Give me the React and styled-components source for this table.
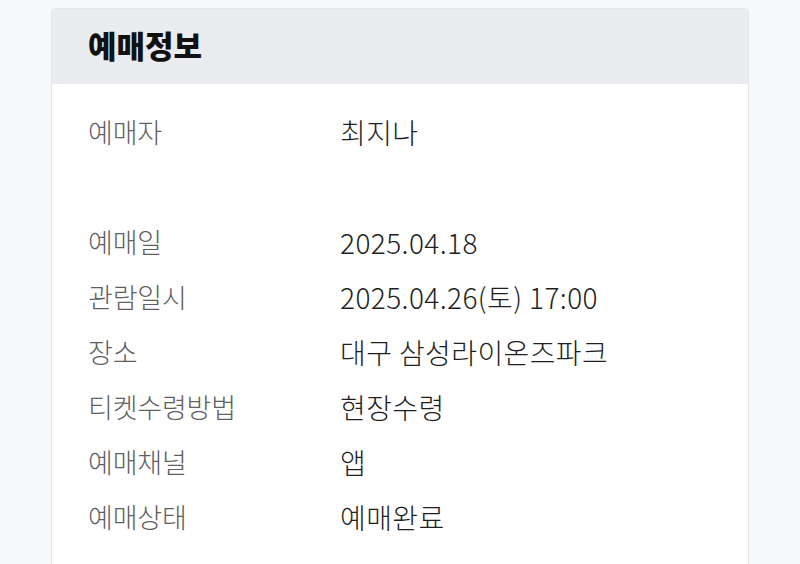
import React from "react";
import styled, { createGlobalStyle } from "styled-components";

const GlobalStyle = createGlobalStyle`
    html, body {
        margin: 0;
        padding: 0;
        background-color: #f7f8fa;
        font-family: "Noto Sans CJK KR", "Noto Sans", sans-serif;
    }
`
const Page = styled.div`
    display: block;
    padding: 8px 51px 0 51px;
    height: 564px;
    overflow: hidden;
    box-sizing: border-box;
`
const Card = styled.section`
    display: block;
    background-color: #ffffff;
    border: 1px solid #e4e6eb;
    border-radius: 4px;
    overflow: hidden;
    min-height: 620px;
`
const CardHeader = styled.header`
    display: flex;
    align-items: center;
    height: 75px;
    padding: 0 36px;
    background-color: #ebecf0;
`
const CardHeaderTitle = styled.h1`
    margin: 0 0 4px 0;
    font-size: 31px;
    font-weight: 800;
    color: #111111;
    letter-spacing: 0;
`
const InfoList = styled.dl`
    display: grid;
    grid-template-columns: 252px 1fr;
    grid-auto-rows: 55px;
    margin: 0;
    padding: 20px 36px 0 36px;
`
const InfoLabel = styled.dt`
    display: flex;
    align-items: center;
    font-size: 27px;
    font-weight: 300;
    color: #5f5f5f;
    letter-spacing: -0.2px;
`
const InfoValue = styled.dd`
    display: flex;
    align-items: center;
    margin: 0;
    font-size: 28px;
    font-weight: 300;
    color: #1f1f1f;
    letter-spacing: 0.4px;
`
const Spacer = styled.div`
    grid-column: 1 / -1;
`

const rows = [
    ["예매일", "2025.04.18"],
    ["관람일시", "2025.04.26(토) 17:00"],
    ["장소", "대구 삼성라이온즈파크"],
    ["티켓수령방법", "현장수령"],
    ["예매채널", "앱"],
    ["예매상태", "예매완료"],
];

const App = () => {
    return (
        <Page>
            <GlobalStyle />
            <Card>
                <CardHeader>
                    <CardHeaderTitle>예매정보</CardHeaderTitle>
                </CardHeader>

                <InfoList>
                    <InfoLabel>예매자</InfoLabel>
                    <InfoValue>최지나</InfoValue>
                    <Spacer />
                    {rows.map(([label, value]) =>
                        <React.Fragment key={label}>
                            <InfoLabel>{label}</InfoLabel>
                            <InfoValue>{value}</InfoValue>
                        </React.Fragment>
                    )}
                </InfoList>
            </Card>
        </Page>
    );
};

export default App;
